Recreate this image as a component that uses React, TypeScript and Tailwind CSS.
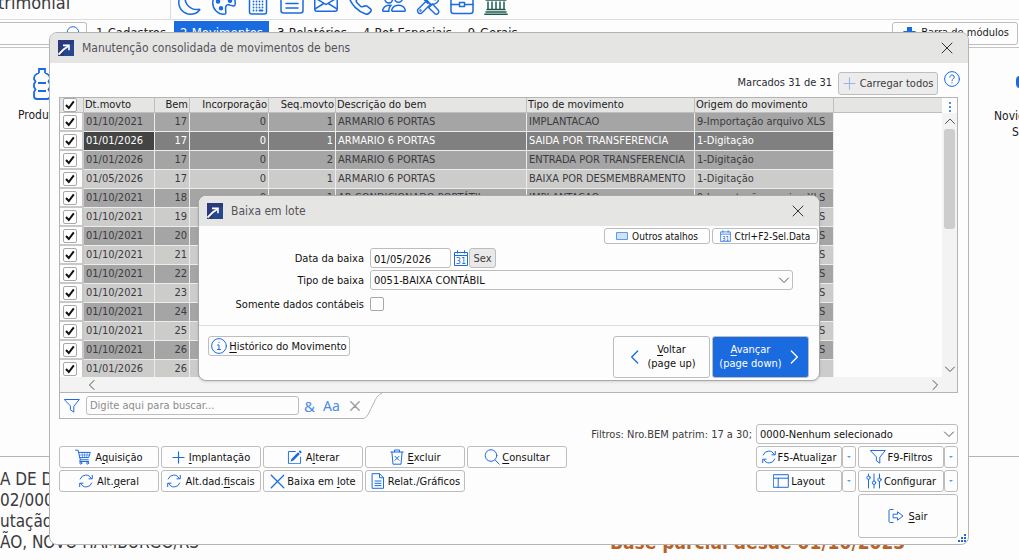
import React, { useState } from "react";
import { BsEnvelope, BsMoon, BsPalette, BsPencilSquare, BsPeople, BsTelephone } from "react-icons/bs";

type SvgProps = { className?: string; box?: string; width?: number; children: React.ReactNode };

function Svg({ className = "size-4", box = "0 0 16 16", width = 1, children }: SvgProps) {
  return (
    <svg
      className={`shrink-0 ${className}`}
      viewBox={box}
      fill="none"
      stroke="currentColor"
      strokeWidth={width}
      strokeLinecap="round"
      strokeLinejoin="round"
      aria-hidden="true"
    >
      {children}
    </svg>
  );
}

const CloseIcon = ({ className = "size-3", width = 1 }: { className?: string; width?: number }) => (
  <Svg className={className} box="0 0 12 12" width={width}>
    <path d="M1 1l10 10M11 1L1 11" />
  </Svg>
);
const PlusIcon = ({ className = "size-4" }: { className?: string }) => (
  <Svg className={className} box="0 0 14 14" width={1.2}>
    <path d="M7 1v12M1 7h12" />
  </Svg>
);
const FunnelIcon = () => (
  <Svg box="0 0 16 16">
    <path d="M.7 1.5h14.6L9.8 8.3v5.9l-3.4-2.4V8.3z" />
  </Svg>
);
const SearchIcon = ({ className = "size-4" }: { className?: string }) => (
  <Svg className={className}>
    <circle cx="7" cy="6.5" r="5.8" />
    <path d="M11.2 11l4 4.2" />
  </Svg>
);
const RefreshIcon = () => (
  <Svg className="size-[14px]" box="0 0 14 14">
    <path d="M1.2 5A6 6 0 0 1 12.2 4.4M12.8 9A6 6 0 0 1 1.8 9.6M13.3 1.4v3.4h-3.4M.7 12.6V9.2h3.4" />
  </Svg>
);
const CartIcon = () => (
  <Svg>
    <path d="M.6 1.2h2.5l2.2 9.6h8M3.6 3.4h11.7l-1.7 5.2H4.8" />
    <path d="M4.3 6h10.200M7 3.500l.6 5M9.600 3.500v5M12.300 3.500l-.6 5" strokeWidth=".6" />
    <path d="M5.300 10.800l-.7 1.700h9" />
    <circle cx="5.8" cy="14.1" r="1" />
    <circle cx="12.6" cy="14.1" r="1" />
  </Svg>
);
const TrashIcon = () => (
  <Svg>
    <path d="M1.8 3h12.4M5.5 2.8V1h5v1.8M2.9 3.2l1.1 12h8l1.1-12M6 7.3l4 4M10 7.3l-4 4" />
  </Svg>
);
const DocIcon = () => (
  <Svg>
    <path d="M2.5.7h7l4 4v10.6h-11zM9.5.9v3.9h3.9M5 8h6M5 10.3h6M5 12.6h6" />
  </Svg>
);
const LayoutIcon = () => (
  <Svg>
    <path d="M.7 1.7h14.6v12.6H.7zM.7 5.2h14.6M5.2 5.2v9.1" />
  </Svg>
);
const SlidersIcon = () => (
  <Svg>
    <path d="M2.5 1v2M2.5 6.4V15M8 1v7M8 11.4V15M13.5 1v4M13.5 8.4V15" />
    <circle cx="2.5" cy="4.7" r="1.7" />
    <circle cx="8" cy="9.7" r="1.7" />
    <circle cx="13.5" cy="6.7" r="1.7" />
  </Svg>
);
const ExitIcon = () => (
  <Svg>
    <path d="M5 1.5H2.2Q1 1.5 1 2.7v10.6q0 1.2 1.2 1.2H5M5.5 6.2h4V3.8L15 8l-5.5 4.2V9.8h-4z" />
  </Svg>
);
const CalendarIcon = ({ className = "h-4 w-[14px]" }: { className?: string }) => (
  <svg className={`shrink-0 ${className}`} viewBox="0 0 14 16" fill="none" stroke="currentColor" aria-hidden="true">
    <path d="M.5 2.5h13v13H.5zM.5 5.5h13M3.5.3v3.2M10.500.3v3.2" />
    <text x="7" y="14" textAnchor="middle" fontSize="9" fill="currentColor" stroke="none" fontFamily="DejaVu Sans Condensed, DejaVu Sans, sans-serif">
      31
    </text>
  </svg>
);

const CalculatorIcon = ({ className }: { className?: string }) => (
  <Svg className={className} box="0 0 24 24" width={1.5}>
    <rect x="3.500" y="1" width="17" height="22" rx="2" />
    <path d="M7 4.500h10v2H7z" />
    <path
      d="M7.500 10.500h.01M10.500 10.500h.01M13.500 10.500h.01M16.500 10.500h.01M7.500 13.500h.01M10.500 13.500h.01M13.500 13.500h.01M16.500 13.500h.01M7.500 16.500h.01M10.500 16.500h.01M13.500 16.500h.01M16.500 16.500h.01M7.500 19.500h.01M10.500 19.500h.01M13.500 19.500h3"
      strokeWidth="1.800"
    />
  </Svg>
);
const ListIcon = ({ className }: { className?: string }) => (
  <Svg className={className} box="0 0 24 24" width={1.5}>
    <rect x="1" y="2" width="22" height="20" rx="2.500" />
    <path d="M6 7.500h12M6 12.500h12M6 17h12" />
  </Svg>
);
const ToolsIcon = ({ className }: { className?: string }) => (
  <Svg className={className} box="0 0 24 24" width={1.4}>
    <path d="M1.500 3.500l2-2 4 2.500v2l7 7M6 6.500l6 6M14.500 15l2-2 6 6.500q.8 1.800-.5 3t-3 .3l-6.300-6 2-2" />
    <path d="M1.800 18.500l9-9Q9.500 4 13 2t6-.5L15.500 5l.8 3 3 .8L22.500 5.500Q23.500 9 21 11.500t-6.500 1.700l-9 9q-1.500 1-3-.3t-.7-3.400z" />
    <circle cx="4.500" cy="19.500" r=".5" />
  </Svg>
);
const BriefcaseIcon = ({ className }: { className?: string }) => (
  <Svg className={className} box="0 0 24 24" width={1.5}>
    <rect x="1" y="5" width="22" height="17.500" rx="2.500" />
    <path d="M7.500 5V2h9v3M1 13.500h8.500M14.500 13.500H23M9.500 11.500h5v4h-5z" />
  </Svg>
);
const BankIcon = ({ className }: { className?: string }) => (
  <Svg className={className} box="0 0 24 24" width={1.5}>
    <path d="M12 1l10 6v2H2V7zM4 11v7M8 11v7M12 11v7M16 11v7M20 11v7M3 18.500h18M2 21h20M.8 23.200h22.400" />
  </Svg>
);

const Chevron = ({ d, className = "size-3" }: { d: string; className?: string }) => (
  <Svg className={className} box="0 0 12 12">
    <path d={d} />
  </Svg>
);
const DOWN = "M1.500 4l4.500 4.500L10.500 4";
const UP = "M1.500 8.500L6 4l4.500 4.500";
const LEFT = "M8 1.500L3.500 6 8 10.500";
const RIGHT = "M4 1.500L8.500 6 4 10.500";

const AppIcon = () => (
  <svg className="size-4 shrink-0" viewBox="0 0 16 16" aria-hidden="true">
    <rect width="16" height="16" fill="#2a3a7c" />
    <rect x="6" y="4" width="10" height="12" fill="#24509a" opacity=".6" />
    <path d="M.5 14.500L5.500 9.500 10.500 6" fill="none" stroke="#fff" strokeWidth="1.800" />
    <path d="M5 5.400h6v4.800" fill="none" stroke="#fff" strokeWidth="1.600" />
  </svg>
);

function Tick({ label, checked = false }: { label: string; checked?: boolean }) {
  return (
    <span className="grid size-[14px] shrink-0">
      <input
        type="checkbox"
        aria-label={label}
        defaultChecked={checked}
        className="peer col-start-1 row-start-1 size-[14px] appearance-none rounded-xs border border-[#a8a8a8] bg-white"
      />
      <svg
        className="pointer-events-none invisible col-start-1 row-start-1 size-[14px] peer-checked:visible"
        viewBox="0 0 14 14"
        fill="none"
        stroke="#111"
        strokeWidth="2"
        aria-hidden="true"
      >
        <path d="M3 7l2.800 3L10.800 3.300" />
      </svg>
    </span>
  );
}

function Btn({ icon, className = "", children }: { icon?: React.ReactNode; className?: string; children?: React.ReactNode }) {
  return (
    <button
      type="button"
      className={`flex items-center justify-center rounded-[3px] border border-[#bdbdbd] whitespace-nowrap ${className}`}
    >
      {icon && <span className="text-[#1b6be0]">{icon}</span>}
      {children}
    </button>
  );
}

const Label = ({ children }: { children: React.ReactNode }) => <span className="pt-0.5">{children}</span>;
const U = ({ children }: { children: React.ReactNode }) => <span className="underline underline-offset-2">{children}</span>;

function SplitBtn({ icon, label, more }: { icon: React.ReactNode; label: React.ReactNode; more: string }) {
  return (
    <div className="flex h-[22px]">
      <Btn className="w-[86px] gap-0.5 bg-[#fdfdfd]" icon={icon}>
        <Label>{label}</Label>
      </Btn>
      <button type="button" aria-label={more} className="grid w-[14px] place-items-center rounded-[3px] border border-[#bdbdbd]">
        <svg className="h-[2px] w-1" viewBox="0 0 4 2" aria-hidden="true">
          <path d="M0 0h4L2 2z" fill="#5b9bea" />
        </svg>
      </button>
    </div>
  );
}

const rows: [string, number, number, number, string, string, string][] = [
  ["01/10/2021", 17, 0, 1, "ARMARIO 6 PORTAS", "IMPLANTACAO", "9-Importação arquivo XLS"],
  ["01/01/2026", 17, 0, 1, "ARMARIO 6 PORTAS", "SAIDA POR TRANSFERENCIA", "1-Digitação"],
  ["01/01/2026", 17, 0, 2, "ARMARIO 6 PORTAS", "ENTRADA POR TRANSFERENCIA", "1-Digitação"],
  ["01/05/2026", 17, 0, 1, "ARMARIO 6 PORTAS", "BAIXA POR DESMEMBRAMENTO", "1-Digitação"],
  ["01/10/2021", 18, 0, 1, "AR CONDICIONADO PORTÁTIL", "IMPLANTACAO", "9-Importação arquivo XLS"],
  ["01/10/2021", 19, 0, 1, "", "", "9-Importação arquivo XLS"],
  ["01/10/2021", 20, 0, 1, "", "", "9-Importação arquivo XLS"],
  ["01/10/2021", 21, 0, 1, "", "", "9-Importação arquivo XLS"],
  ["01/10/2021", 22, 0, 1, "", "", "9-Importação arquivo XLS"],
  ["01/10/2021", 23, 0, 1, "", "", "9-Importação arquivo XLS"],
  ["01/10/2021", 24, 0, 1, "", "", "9-Importação arquivo XLS"],
  ["01/10/2021", 25, 0, 1, "", "", "9-Importação arquivo XLS"],
  ["01/10/2021", 26, 0, 1, "", "", "9-Importação arquivo XLS"],
  ["01/01/2026", 26, 0, 1, "", "", "1-Digitação"],
];

const rowTone = (i: number) =>
  i === 1
    ? "bg-[#808080] text-white"
    : i % 2 === 0
      ? "bg-[#a5a5a5] text-[#3c3a40]"
      : "bg-[#cccccb] text-[#3c3a40]";

function MovementsTable() {
  const head = "h-[15px] border-r border-b border-[#bfbfbf] px-px font-normal";
  const cell = "h-[19px] border-r border-b border-[#ececec] px-0.5";
  return (
    <table className="w-full table-fixed border-separate border-spacing-0 leading-[14px] whitespace-nowrap">
      <colgroup>
        <col className="w-[24px]" />
        <col className="w-[71px]" />
        <col className="w-[35px]" />
        <col className="w-[79px]" />
        <col className="w-[67px]" />
        <col className="w-[191px]" />
        <col className="w-[168px]" />
        <col className="w-[139px]" />
        <col />
      </colgroup>
      <thead className="bg-[#e5e5e4] text-left text-[#1c1a22]">
        <tr>
          <th className="h-[15px] border-r border-b border-[#bfbfbf] pl-[3px]">
            <Tick label="Marcar todos" checked />
          </th>
          <th className={head}>Dt.movto</th>
          <th className={`${head} text-right`}>Bem</th>
          <th className={`${head} text-right`}>Incorporação</th>
          <th className={`${head} text-right`}>Seq.movto</th>
          <th className={head}>Descrição do bem</th>
          <th className={head}>Tipo de movimento</th>
          <th className={head}>Origem do movimento</th>
          <th className="border-b border-[#bfbfbf]" />
        </tr>
      </thead>
      <tbody>
        {rows.map((r, i) => (
          <tr key={i} className={rowTone(i)}>
            <td className="h-[19px] border-r-2 border-b-2 border-[#c8c8c8] bg-[#fdfdfd] pl-[3px]">
              <Tick label={`Marcar bem ${r[1]}`} checked />
            </td>
            <td className={i === 1 ? `${cell} bg-[#444444]` : cell}>{r[0]}</td>
            <td className={`${cell} text-right`}>{r[1]}</td>
            <td className={`${cell} text-right`}>{r[2]}</td>
            <td className={`${cell} text-right`}>{r[3]}</td>
            <td className={cell}>{r[4]}</td>
            <td className={cell}>{r[5]}</td>
            <td className={cell}>{r[6]}</td>
            <td className="bg-[#fdfdfd]" />
          </tr>
        ))}
      </tbody>
    </table>
  );
}

function Background() {
  const icons = [BsMoon, BsPalette, CalculatorIcon, ListIcon, BsEnvelope, BsTelephone, BsPeople, ToolsIcon, BriefcaseIcon];
  const menus = ["1-Cadastros", "2-Movimentos", "3-Relatórios", "4-Rot.Especiais", "9-Gerais"];
  return (
    <div className="text-xs text-[#1c1a22]">
      <header className="flex h-5 items-end border-b border-[#dcdcdc]">
        <div className="flex h-5 w-[171px] items-end border-r border-[#dcdcdc] pb-1 text-[18px] leading-6 text-[#3c3a40]">
          <span className="-ml-3">atrimonial</span>
        </div>
        <div className="flex gap-[10px] pb-1 pl-[7px] text-[#1b6be0]">
          {icons.map((Icon, i) => (
            <Icon key={i} className="size-6" />
          ))}
          <BankIcon className="size-6 text-[#1f5c4d]" />
        </div>
      </header>
      <nav className="flex h-7 items-start border-b border-[#c4c4c4]">
        <div className="mt-0.5 flex h-[23px] w-[87px] items-center rounded-r-[3px] border border-l-0 border-[#bdbdbd] pr-1">
          <input aria-label="Buscar" className="min-w-0 flex-1" />
          <SearchIcon className="size-4 text-[#1b6be0]" />
        </div>
        <div className="mt-px flex h-[26px] pl-px text-[13px] leading-5">
          {menus.map((m, i) => (
            <a
              key={m}
              href="#"
              className={i === 1 ? "bg-[#1b6be0] px-[6px] pt-0.5 text-white" : "px-2 pt-0.5"}
            >
              {m}
            </a>
          ))}
        </div>
        <button
          type="button"
          className="mt-0.5 mr-px ml-auto flex h-[23px] items-center gap-1 rounded-[3px] border border-[#bdbdbd] px-2 text-[11px] whitespace-nowrap"
        >
          <svg className="size-4 text-[#1b6be0]" viewBox="0 0 16 16" aria-hidden="true">
            <path d="M6 1h5v4h4l-6.500 8L2 5h4z" fill="currentColor" />
          </svg>
          Barra de módulos
        </button>
      </nav>
      <main className="flex h-[409px] justify-between border-b border-[#b4b4b4] pt-5 text-[12px]">
        <div className="flex flex-col items-center gap-[7px] pl-[18px]">
          <svg className="h-8 w-5 text-[#1b6be0]" viewBox="0 0 20 32" fill="none" stroke="currentColor" strokeWidth="1.800" aria-hidden="true">
            <path d="M7 5V1h6v4M7 5C3 6 2 8 2 11l1.500 2.500L2 16v3l1.500 2.500L2 24v4q0 3 3 3h10q3 0 3-3v-4l-1.500-2.500L18 19v-3l-1.500-2.500L18 11c0-3-1-5-5-6M6 15h8M6 23h8" />
          </svg>
          Produtos
        </div>
        <div className="w-[25px] overflow-hidden leading-4">
          <div className="ml-[22px] mt-[8px] h-3 w-6 rounded-l-[4px] bg-[#1b6be0]" />
          <p className="mt-[20px] w-20">Novidades</p>
          <p className="w-20 pl-[18px]">Sistema</p>
        </div>
      </main>
      <footer className="flex items-end overflow-hidden pt-3 text-[17px] leading-[21px] whitespace-nowrap text-[#3c3a40]">
        <div className="w-[610px]">
          <p>A DE D</p>
          <p>02/0001</p>
          <p>utação:</p>
          <p>ÃO, NOVO HAMBURGO/RS</p>
        </div>
        <p className="text-[19px] font-bold text-[#b96327]">Base parcial desde 01/10/2023</p>
      </footer>
    </div>
  );
}

function WindowTitle({ children }: { children: string }) {
  return (
    <header className="flex h-[30px] items-center gap-2 rounded-t-[7px] bg-[#e5e5e4] pr-[15px] pl-2 text-[12px] text-[#55535a]">
      <AppIcon />
      <h2 className="flex-1">{children}</h2>
      <button type="button" aria-label="Fechar" className="text-[#333]">
        <CloseIcon />
      </button>
    </header>
  );
}

function BatchDialog() {
  const [date, setDate] = useState("01/05/2026");
  return (
    <section className="absolute top-[195px] right-[199px] left-[198px] rounded-lg border border-[#a9a9a9] bg-[#fdfdfd] shadow-sm">
      <WindowTitle>Baixa em lote</WindowTitle>
      <div className="flex justify-end gap-0.5 pt-0.5 pr-px text-[10px]">
        <Btn
          className="h-4 w-[106px] gap-1"
          icon={
            <svg className="h-2 w-3" viewBox="0 0 12 8" aria-hidden="true">
              <path d="M.5.5h11v7H.5z" fill="#cfe3f6" stroke="#5b9bea" />
            </svg>
          }
        >
          Outros atalhos
        </Btn>
        <Btn className="h-4 w-[106px] gap-1" icon={<CalendarIcon className="h-3 w-[11px]" />}>
          Ctrl+F2-Sel.Data
        </Btn>
      </div>
      <form className="grid grid-cols-[165px_1fr] gap-x-1.5 gap-y-0.5 pt-1 pr-[26px]">
        <label htmlFor="data" className="self-center pt-0.5 text-right">
          Data da baixa
        </label>
        <div className="flex h-5 items-center">
          <input
            id="data"
            value={date}
            onChange={(e) => setDate(e.target.value)}
            className="h-5 w-[81px] rounded-[3px] border border-[#bdbdbd] px-[3px] pt-0.5"
          />
          <button type="button" aria-label="Calendário" className="mr-px ml-[3px] text-[#1b6be0]">
            <CalendarIcon />
          </button>
          <output className="grid h-5 w-[27px] place-items-center rounded-[3px] border border-[#bdbdbd] bg-[#e9e9e9] pt-0.5 text-[#3c3a40]">
            Sex
          </output>
        </div>
        <label htmlFor="tipo" className="self-center pt-0.5 text-right">
          Tipo de baixa
        </label>
        <div className="grid items-center">
          <select
            id="tipo"
            className="col-start-1 row-start-1 h-5 appearance-none rounded-[3px] border border-[#bdbdbd] px-[3px] pt-0.5"
          >
            <option>0051-BAIXA CONTÁBIL</option>
          </select>
          <Chevron d={DOWN} className="pointer-events-none col-start-1 row-start-1 mr-[3px] size-3 justify-self-end text-[#555]" />
        </div>
        <span className="self-center pt-0.5 text-right whitespace-nowrap">Somente dados contábeis</span>
        <div className="flex h-6 items-center">
          <Tick label="Somente dados contábeis" />
        </div>
      </form>
      <footer className="mt-[9px] flex items-start gap-0.5 border-t border-[#dedede] pt-[10px] pr-[10px] pb-0.5 pl-[9px]">
        <Btn
          className="mr-auto h-5 w-[142px] gap-0.5"
          icon={
            <Svg>
              <circle cx="8" cy="8" r="7.400" />
              <path d="M6.500 7H8v4.500M6.500 11.500h3M8 4.200v.3" />
            </Svg>
          }
        >
          <Label>
            <U>H</U>istórico do Movimento
          </Label>
        </Btn>
        <Btn className="h-[42px] w-[97px] gap-1" icon={<Chevron d={LEFT} className="size-4" />}>
          <span className="leading-[14px]">
            <U>V</U>oltar
            <br />
            (page up)
          </span>
        </Btn>
        <Btn className="h-[42px] w-[97px] gap-1 bg-[#1b6be0] text-white">
          <span className="leading-[14px]">
            <U>A</U>vançar
            <br />
            (page down)
          </span>
          <Chevron d={RIGHT} className="size-4" />
        </Btn>
      </footer>
    </section>
  );
}

function MainWindow() {
  const act = "h-[22px] w-[100px]";
  return (
    <section className="absolute top-8 right-[50px] left-[49px] rounded-lg border border-[#b4b4b4] bg-[#fdfdfd] text-[11px] text-[#111]">
      <WindowTitle>Manutenção consolidada de movimentos de bens</WindowTitle>
      <div className="pr-[10px] pb-[6px] pl-[9px]">
        <div className="flex items-start justify-end pt-[8px]">
          <span className="pt-[4px] pr-[6px] text-[#2c2a32]">Marcados 31 de 31</span>
          <Btn
            className="mt-px mb-[2px] h-[23px] w-[100px] gap-1 bg-[#ececec] text-[#3c3a40]"
            icon={<PlusIcon className="size-[13px] opacity-40" />}
          >
            <Label>Carregar todos</Label>
          </Btn>
          <button type="button" aria-label="Ajuda" className="-mr-0.5 ml-[6px] text-[#1b6be0]">
            <Svg>
              <circle cx="8" cy="8" r="7.400" />
              <path d="M5.800 6.200a2.200 2.200 0 1 1 3.400 1.800Q8 8.700 8 9.700M8 11.700v.3" />
            </Svg>
          </button>
        </div>
        <div className="border border-[#b4b4b4]">
          <div className="flex h-[279px]">
            <div className="min-w-0 flex-1 overflow-hidden">
              <MovementsTable />
            </div>
            <div className="flex w-[15px] flex-col items-center bg-[#f3f3f3] text-[#555]">
              <button type="button" aria-label="Opções" className="grid h-[15px] w-full place-items-center bg-[#fdfdfd] text-[#4a8be8]">
                <svg className="h-3 w-[2px]" viewBox="0 0 2 12" fill="currentColor" aria-hidden="true">
                  <path d="M0 2h2v2H0zM0 6h2v2H0zM0 10h2v2H0z" />
                </svg>
              </button>
              <Chevron d={UP} className="my-0.5 size-3" />
              <div className="h-[100px] w-[11px] rounded-[3px] bg-[#cdcdcd]" />
              <Chevron d={DOWN} className="mt-auto mb-0.5 size-3" />
            </div>
          </div>
          <div className="flex h-[15px] items-center justify-between bg-[#f3f3f3] pr-4 pl-[26px] text-[#555]">
            <Chevron d={LEFT} />
            <Chevron d={RIGHT} />
          </div>
        </div>
        <div className="flex h-[26px]">
          <div className="flex items-center border-b border-l border-[#b4b4b4] pl-1 text-[#1b6be0]">
            <FunnelIcon />
            <input
              aria-label="Buscar movimentos"
              placeholder="Digite aqui para buscar..."
              className="ml-[6px] h-[19px] w-[213px] rounded-[3px] border border-[#bdbdbd] px-[3px] placeholder:text-[#8c8c8c]"
            />
            <button type="button" className="ml-[5px] font-['Noto_Sans',sans-serif] text-[15px] leading-5 text-[#4a8be8]">
              &amp;
            </button>
            <button type="button" className="ml-[8px] font-['Noto_Sans',sans-serif] text-[14px] leading-5 text-[#4a8be8]">
              Aa
            </button>
            <button type="button" aria-label="Limpar" className="ml-[10px] text-[#a0a0a0]">
              <CloseIcon className="size-[10px]" width={1.8} />
            </button>
          </div>
          <svg className="h-[26px] w-6 text-[#b4b4b4]" viewBox="0 0 24 26" fill="none" stroke="currentColor" aria-hidden="true">
            <path d="M0 25.500h3c4 0 6-6 9-12S18 .5 22 .5" />
          </svg>
        </div>
        <div className="flex items-center justify-end gap-1 pt-[5px] text-[#3c3a40]">
          <label htmlFor="filtro" className="pt-0.5">
            Filtros: Nro.BEM patrim: 17 a 30;
          </label>
          <div className="grid w-[202px] items-center text-[#111]">
            <select
              id="filtro"
              className="col-start-1 row-start-1 h-5 appearance-none rounded-[3px] border border-[#bdbdbd] px-[3px] pt-0.5"
            >
              <option>0000-Nenhum selecionado</option>
            </select>
            <Chevron d={DOWN} className="pointer-events-none col-start-1 row-start-1 mr-[3px] size-3 justify-self-end text-[#555]" />
          </div>
        </div>
        <div className="flex items-start justify-between pt-0.5">
          <div className="grid grid-cols-[repeat(5,100px)] gap-0.5">
            <Btn className={`${act} gap-1`} icon={<CartIcon />}>
              <Label>A<U>q</U>uisição</Label>
            </Btn>
            <Btn className={`${act} gap-1`} icon={<PlusIcon className="size-[13px]" />}>
              <Label><U>I</U>mplantação</Label>
            </Btn>
            <Btn className={`${act} gap-1`} icon={<BsPencilSquare className="size-[15px]" />}>
              <Label>A<U>l</U>terar</Label>
            </Btn>
            <Btn className={`${act} gap-0.5`} icon={<TrashIcon />}>
              <Label><U>E</U>xcluir</Label>
            </Btn>
            <Btn className={`${act} gap-0.5`} icon={<SearchIcon />}>
              <Label><U>C</U>onsultar</Label>
            </Btn>
            <Btn className={`${act} gap-1`} icon={<RefreshIcon />}>
              <Label>Alt.<U>g</U>eral</Label>
            </Btn>
            <Btn className={`${act} gap-1`} icon={<RefreshIcon />}>
              <Label>Alt.dad.<U>f</U>iscais</Label>
            </Btn>
            <Btn className={`${act} gap-0.5`} icon={<CloseIcon className="size-[15px]" />}>
              <Label>Baixa em <U>l</U>ote</Label>
            </Btn>
            <Btn className={`${act} gap-0.5`} icon={<DocIcon />}>
              <Label>Relat./Gráficos</Label>
            </Btn>
          </div>
          <div className="grid grid-cols-2 gap-0.5">
            <SplitBtn icon={<RefreshIcon />} label={<>F5-Atuali<U>z</U>ar</>} more="Mais opções de atualizar" />
            <SplitBtn icon={<FunnelIcon />} label="F9-Filtros" more="Mais opções de filtros" />
            <SplitBtn icon={<LayoutIcon />} label="Layout" more="Mais opções de layout" />
            <SplitBtn icon={<SlidersIcon />} label="Configurar" more="Mais opções de configurar" />
            <Btn className="col-start-2 h-11 gap-1" icon={<ExitIcon />}>
              <Label><U>S</U>air</Label>
            </Btn>
          </div>
        </div>
      </div>
      <svg className="absolute right-0.5 bottom-0.5 size-2 text-[#1b6be0]" viewBox="0 0 8 8" fill="currentColor" aria-hidden="true">
        <path d="M6 0h2v2H6zM3 3h2v2H3zM6 3h2v2H6zM0 6h2v2H0zM3 6h2v2H3zM6 6h2v2H6z" />
      </svg>
    </section>
  );
}

export default function App() {
  return (
    <div className="relative h-screen overflow-hidden bg-[#fdfdfd] font-['DejaVu_Sans_Condensed','DejaVu_Sans',sans-serif] text-[11px] text-[#111]">
      <Background />
      <MainWindow />
      <BatchDialog />
    </div>
  );
}
